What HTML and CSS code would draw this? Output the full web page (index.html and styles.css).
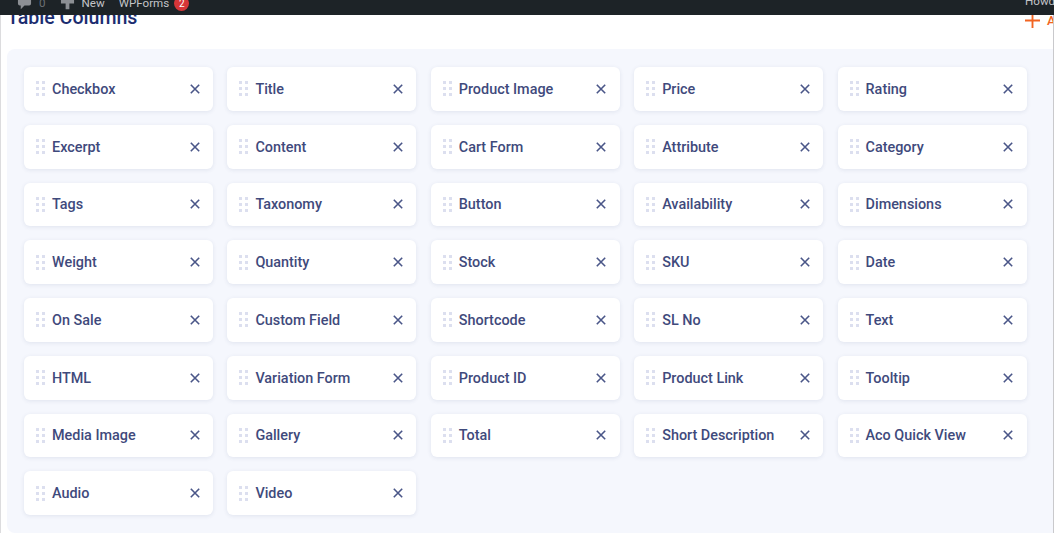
FILE: index.html
```html
<!DOCTYPE html>
<html lang="en">
<head>
<meta charset="utf-8">
<title>Table Columns</title>
<link rel="stylesheet" href="styles.css">
</head>
<body>
<header class="adminbar">
  <div class="bar-left">
    <span class="bar-item"><svg class="bar-icon" viewBox="0 0 16 16"><path d="M3 1h10a2 2 0 0 1 2 2v5a2 2 0 0 1-2 2H8l-4 4v-4H3a2 2 0 0 1-2-2V3a2 2 0 0 1 2-2z"/></svg><span class="dim">0</span></span>
    <span class="bar-item"><svg class="bar-icon" viewBox="0 0 16 16"><path d="M6 0h4v4h5v4h-5v6H6V8H1V4h5z"/></svg>New</span>
    <span class="bar-item">WPForms<span class="badge">2</span></span>
  </div>
  <span class="howdy">Howdy</span>
</header>
<main class="page">
  <div class="head">
    <h2 class="title">Table Columns</h2>
    <span class="add"><svg class="add-icon" viewBox="0 0 16 16"><path d="M8 0v16M0 8h16"/></svg>Add</span>
  </div>
  <section class="panel">
    <div class="grid" id="grid"></div>
  </section>
</main>
<template id="card">
  <div class="card">
    <svg class="grip" viewBox="0 0 9 15"><g><rect x="0" y="0" width="3" height="3"/><rect x="6" y="0" width="3" height="3"/><rect x="0" y="6" width="3" height="3"/><rect x="6" y="6" width="3" height="3"/><rect x="0" y="12" width="3" height="3"/><rect x="6" y="12" width="3" height="3"/></g></svg>
    <span class="label"></span>
    <svg class="close" viewBox="0 0 10 10"><path d="M.8.8l8.4 8.4M9.2.8L.8 9.2"/></svg>
  </div>
</template>
<script src="app.js"></script>
</body>
</html>
```
FILE: styles.css
```css
* { box-sizing: border-box; }
html, body { margin: 0; padding: 0; height: 533px; overflow: hidden; background: #fff; }
body { font-family: Roboto, "Liberation Sans", sans-serif; border-left: 1px solid #dcdcde; border-right: 1px solid #c9c9cc; }
.adminbar { position: absolute; top: 0; left: 0; width: 1054px; height: 15px; background: #1d2327; color: #c3c4c7; font-size: 11.6px; display: flex; justify-content: space-between; overflow: hidden; z-index: 2; }
.bar-left { display: flex; padding-left: 17px; gap: 14px; margin-top: -8px; height: 22px; align-items: center; }
.bar-item { display: flex; align-items: center; gap: 7px; }
.bar-icon { width: 15px; height: 15px; fill: #8c8f94; }
.dim { color: #6c7075; }
.badge { width: 15px; height: 15px; border-radius: 50%; background: #d63638; color: #fff; font-size: 10px; display: flex; align-items: center; justify-content: center; margin-left: -2px; }
.howdy { margin-top: -8px; line-height: 18px; width: 29px; flex: none; overflow: hidden; }
.page { padding: 0 0 0 6px; }
.head { height: 49px; display: flex; justify-content: space-between; overflow: hidden; }
.title { margin: 5px 0 0; font-weight: 500; font-size: 19.6px; line-height: 26px; color: #1c2d70; }
.add { display: flex; align-items: flex-start; gap: 7px; margin: 13px 0 0 0; width: 28px; color: #f26522; font-size: 13px; font-weight: 500; line-height: 16px; flex: none; white-space: nowrap; overflow: hidden; }
.add-icon { width: 15px; height: 15px; flex: none; fill: none; stroke: #f26522; stroke-width: 2; }
.panel { background: #f5f7fd; border-radius: 8px 0 0 8px; padding: 18px 26px 18px 17px; height: 484px; }
.grid { display: grid; grid-template-columns: repeat(5, 189px); column-gap: 14.4px; row-gap: 14px; }
.card { height: 43.75px; background: #fff; border-radius: 6px; box-shadow: 0 1px 4px rgba(42, 54, 110, .1); display: flex; align-items: center; padding: 0 13.4px 0 12px; }
.grip { width: 9px; height: 15px; fill: #dcdfef; flex: none; }
.label { flex: 1; margin-left: 7px; padding-top: 1px; font-size: 14.4px; font-weight: 500; color: #3f4a7c; white-space: nowrap; }
.close { width: 10px; height: 10px; flex: none; fill: none; stroke: #4a5688; stroke-width: 1.6; }
```
FILE: app.js
```js
const names = ["Checkbox","Title","Product Image","Price","Rating","Excerpt","Content","Cart Form","Attribute","Category","Tags","Taxonomy","Button","Availability","Dimensions","Weight","Quantity","Stock","SKU","Date","On Sale","Custom Field","Shortcode","SL No","Text","HTML","Variation Form","Product ID","Product Link","Tooltip","Media Image","Gallery","Total","Short Description","Aco Quick View","Audio","Video"];
const grid = document.getElementById("grid");
const tpl = document.getElementById("card");
for (const name of names) {
  const node = tpl.content.cloneNode(true);
  node.querySelector(".label").textContent = name;
  grid.appendChild(node);
}
```
